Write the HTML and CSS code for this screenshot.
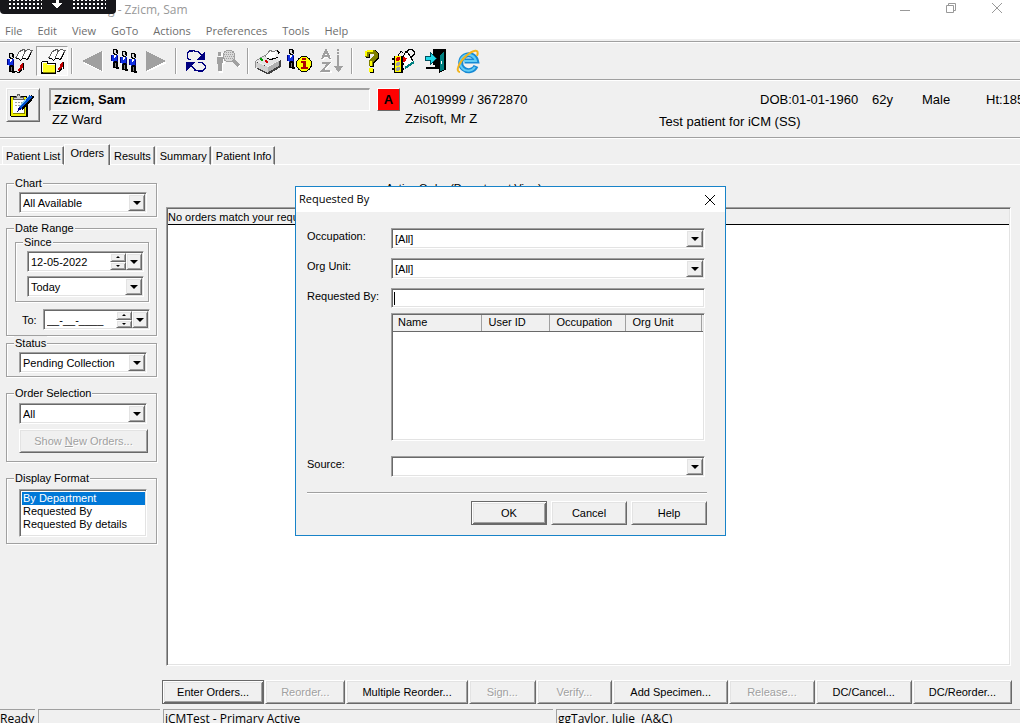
FILE: index.html
```html
<!DOCTYPE html>
<html lang="en">
<head>
<meta charset="utf-8">
<title>Zzicm, Sam</title>
<link rel="stylesheet" href="styles.css">
</head>
<body>
<svg class="defs" width="0" height="0" aria-hidden="true">
  <defs>
    <symbol id="person" viewBox="0 0 8 20">
      <path fill="#000" d="M2 0h4v1h1v4h-1v1h-3v-1h-1zM2 12h5v6h1v2h-3v-1h-3z"/>
      <path fill="#d8d8d8" d="M3 1h2v3h-2zM4 4h2v1h-2z"/>
      <path fill="#1030e0" d="M1 6h6v6h-4v1h-2z"/>
      <path fill="#fff" d="M3 6h2v2h-1v1h-1zM1 12h1v2h-1z"/>
      <path fill="#000080" d="M0 6h1v6h-1zM6 7h1v6h-1z"/>
      <path fill="#808080" d="M4 14h1v4h-1z"/>
    </symbol>
    <symbol id="book" viewBox="0 0 18 13">
      <path fill="#fff" d="M1 9L5 2L9 1L11 2L14 1L17 2L13 9L10 10L7 11L5 9Z"/>
      <path fill="none" stroke="#606060" d="M.5 9.500L4.500 2.500L8.500 .5L10.500 1.500L7 9M10.500 1.500L13.500 .5L17 1.500L13 9.500"/>
      <path fill="none" stroke="#000" d="M.5 9.500h3l2 2l2-2h3l1 1l2-1M16 4l-3 6"/>
    </symbol>
    <symbol id="redarrow" viewBox="0 0 8 10">
      <path fill="#c00000" d="M6 0v6l-1-1l-3 3h-1v-1l2-3l-1-1z"/>
      <path fill="none" stroke="#000" d="M6.500 0v7M0 9.500h2l3-3"/>
    </symbol>
  </defs>
</svg>

<header class="titlebar">
  <h1 class="title">g - Zzicm, Sam</h1>
  <div class="window-buttons">
    <button type="button" aria-label="Minimize"><svg width="12" height="12"><path d="M1 8.500h10"/></svg></button>
    <button type="button" aria-label="Restore"><svg width="12" height="12"><path d="M1.500 3.500h7v7h-7zM3.500 3v-1.500h7v7h-2"/></svg></button>
    <button type="button" aria-label="Close"><svg width="12" height="12"><path d="M1 1l10 10M11 1l-10 10"/></svg></button>
  </div>
  <div class="session-tab">
    <svg width="116" height="14" aria-hidden="true">
      <defs><pattern id="dots" width="4" height="4" patternUnits="userSpaceOnUse" x="1" y="-1"><rect width="2" height="2" fill="#fff"/></pattern></defs>
      <rect x="9" width="33" height="9" fill="url(#dots)"/>
      <rect x="73" width="33" height="9" fill="url(#dots)"/>
      <path fill="#fff" d="M56 0h3v3h3l-5 6l-5-6h4z"/>
    </svg>
  </div>
</header>

<nav class="menubar">
  <button type="button">File</button><button type="button">Edit</button><button type="button">View</button><button type="button">GoTo</button><button type="button">Actions</button><button type="button">Preferences</button><button type="button">Tools</button><button type="button">Help</button>
</nav>

<div class="toolbar" role="toolbar">
  <button type="button" aria-label="Patient list"><svg width="32" height="28"><use href="#person" x="3" y="6" width="8" height="20"/><use href="#book" x="11" y="2" width="18" height="13"/><use href="#redarrow" x="13" y="16" width="8" height="10"/><path fill="none" stroke="#000" d="M10 24.500h3"/></svg></button>
  <button type="button" class="pressed" aria-label="Patient folder"><svg width="32" height="28"><use href="#book" x="12" y="2" width="18" height="13"/><path fill="#000" d="M5 15h1v-1h6v2h8v11h-15z"/><path fill="#fff" d="M6 16v-1h5v2h8v8h-13z"/><path fill="#ffff20" d="M7 18h12v7h-12z"/><path fill="#ffff20" d="M7 16h4v2h-4z"/><path fill="#808000" d="M7 25h12v1h-12z"/><use href="#redarrow" x="21" y="15" width="8" height="10"/></svg></button>
  <span class="sep"></span>
  <button type="button" aria-label="Previous patient" disabled><svg width="32" height="28"><path fill="#fff" d="M27 5v20l-20-9z"/><path fill="#a0a0a0" d="M26 4v20l-20-10z"/></svg></button>
  <button type="button" aria-label="Select patient"><svg width="32" height="28"><use href="#person" x="3" y="2" width="8" height="20"/><use href="#person" x="12" y="4" width="8" height="20"/><use href="#person" x="21" y="6" width="8" height="20"/></svg></button>
  <button type="button" aria-label="Next patient" disabled><svg width="32" height="28"><path fill="#fff" d="M7 5v20l20-9z"/><path fill="#a0a0a0" d="M6 4v20l20-10z"/></svg></button>
  <span class="sep"></span>
  <button type="button" aria-label="Refresh"><svg width="32" height="28"><path fill="none" stroke="#000080" d="M11 12.500h-2l-2-2v-4l3-3h4l1 1h3l4 4M8 4.500h5M18 15.500h4l3 3v3l-3 3h-3l-1-1h-2l-5-5M19 23.500h4M15 4.500h3M14 23.500h3"/><path fill="#000080" d="M25 4v9h-9l5-4zM6 15h9l-4 4l-5 5z"/></svg></button>
  <button type="button" aria-label="Find patient" disabled><svg width="32" height="28"><path fill="#fff" d="M7 6h4v4h2v7h-2v9h-4z"/><path fill="#a0a0a0" d="M6 5h3v4h-3zM5 10h6v6h-1v8h-4v-7h-1z"/><path fill="none" stroke="#fff" stroke-width="3" d="M22 14l6 5"/><circle cx="17" cy="9" r="6" fill="#d8d8d8" stroke="#a0a0a0"/><path stroke="#a0a0a0" stroke-width="3" d="M21 13l6 6"/><path stroke="#a0a0a0" stroke-dasharray="1 1" d="M12 7.500h10M13 9.500h10M12 11.500h10M14 5.500h7"/></svg></button>
  <span class="sep"></span>
  <button type="button" aria-label="Print"><svg width="32" height="28"><path fill="#404040" d="M5 15l11 5l13-7v7l-12 7h-2l-10-5z"/><path fill="#e4e4e4" d="M4 14l9-5l15 4l-12 6z"/><path fill="#d0d0d0" d="M4 15l12 5v6l-12-6z"/><path fill="#b0b0b0" d="M16 20l11-6v5l-11 6z"/><path fill="none" stroke="#909090" d="M3.500 14v7M4 13.500l9-5"/><path fill="#fff" d="M14 9l4-6l3 1l4-1l-3 9l-3-1l-3 1z"/><path fill="none" stroke="#808080" d="M13 9.500l5-6l3 1l4-1"/><path fill="none" stroke="#000" d="M25 3.500l2 2l-1 1M15 11.500l4 1l3-1l4-1"/><path stroke="#00a000" stroke-width="2" d="M8 12l3 1"/><path stroke="#d00000" stroke-width="2" d="M13 14l3 1"/></svg></button>
  <button type="button" aria-label="Patient information"><svg width="32" height="28"><use href="#person" x="3" y="2" width="8" height="20"/><circle cx="20" cy="17" r="8" fill="#000"/><circle cx="20" cy="17" r="7" fill="#ff0"/><path fill="#b00000" d="M18 11h4v2h-4zM17 14h5v6h2v2h-7v-2h2v-4h-2z"/></svg></button>
  <button type="button" aria-label="Sort" disabled><svg width="32" height="28"><path fill="none" stroke="#fff" stroke-width="2" d="M7 13l4-9l4 9M8 10h7M7 16h7l-7 9h9"/><path fill="none" stroke="#a0a0a0" stroke-width="2" d="M6 12l4-9l4 9M7 9h6M6 16h7l-7 8h8M22 2v2M22 5v2M22 8v13"/><path fill="#a0a0a0" d="M18 19h9l-4 6h-1z"/></svg></button>
  <span class="sep"></span>
  <button type="button" aria-label="Help"><svg width="32" height="28"><path fill="none" stroke="#000" stroke-width="4" d="M12 11v-5l2-1h5l2 2v4l-5 4v5M16 22v4"/><path fill="none" stroke="#808000" stroke-width="4" d="M11 10v-4l2-1h5l2 2v3l-5 4v5"/><path fill="none" stroke="#ff0" stroke-width="2" d="M10 9v-4l2-1h5M15 14v5"/><path fill="#ff0" d="M13 21h4v4h-4z"/></svg></button>
  <button type="button" aria-label="Order status"><svg width="32" height="28"><path stroke="#000" stroke-width="2" d="M4 12h12M4 17h12M4 22h12"/><path fill="#000" d="M6 9h9v17h-9z"/><path fill="#ff0" d="M7 9h6v16h-6z"/><circle cx="10" cy="12" r="2" fill="#d00000"/><circle cx="10" cy="17" r="2" fill="#a0a0a0"/><circle cx="10" cy="22" r="2" fill="#a0a0a0"/><path fill="#fff" d="M16 10l4-6l6 11l-8 5l-3-5z"/><path fill="none" stroke="#000" d="M10 8.500l3-4l2 1M15 10l3-6M18 5.500l3-3h3l2 2v3l-3 3M19 4l7 12"/><path fill="#e00000" d="M15 10l4 1l-2 4h-2z"/><path fill="none" stroke="#008080" stroke-width="2" d="M17 21l9-6"/></svg></button>
  <button type="button" aria-label="Exit"><svg width="32" height="28"><path fill="#000" d="M13 2h13v21h-5v-1h-15v-2h9v-2h-2z"/><path fill="#008080" stroke="#000" d="M19.500 8.500l5-5v19l-5 3z"/><path fill="#20d8e8" stroke="#005060" d="M5.500 9.500h5v-4l6 6l-6 6v-4h-5z"/><path stroke="#fff" d="M21.500 14v3"/></svg></button>
  <button type="button" aria-label="Browser"><svg class="smooth" width="32" height="28"><path fill="none" stroke="#1689d4" stroke-width="5" d="M24 19a8 8 0 1 1 .5-5h-12"/><path fill="none" stroke="#62cdf5" stroke-width="2" d="M23 20a8 8 0 1 1 1-6h-12"/><path fill="none" stroke="#f2b41c" stroke-width="2" d="M8 25c-5 0-1-10 6-16s14-8 11 0"/></svg></button>
</div>

<section class="patient" aria-label="Patient">
  <button type="button" class="chart-button raised" aria-label="Chart"><svg width="30" height="30"><path fill="#000" d="M4 6h16v2h1v19h-17v-1h-1v-20z"/><path fill="#f0f000" d="M4 7h15v19h-15z"/><path fill="#808000" d="M6 9h12v15h-12z"/><path fill="#fff" d="M6 10h11v13h-11z"/><path fill="#d0d0d0" stroke="#606060" d="M6.500 9.500v-2h3l1-3h2l1 3h3v2z"/><path stroke="#a0a0a0" stroke-dasharray="2 1" d="M8 12.500h8M8 15.500h6"/><path stroke="#000" stroke-width="4" d="M14 19l12-13"/><path stroke="#0050d0" stroke-width="3" d="M13 18l11-12"/><path stroke="#80c8f0" d="M12 17l10-11"/><path fill="#000080" d="M10 22l2-5l3 2z"/></svg></button>
  <div class="who">
    <div class="name">Zzicm, Sam</div>
    <div class="ward">ZZ Ward</div>
  </div>
  <button type="button" class="alert">A</button>
  <div class="ids"><div class="mrn">A019999 / 3672870</div><div class="doctor">Zzisoft, Mr Z</div></div>
  <div class="facts">
    <div class="demographics"><span class="dob">DOB:01-01-1960</span><span class="age">62y</span><span class="sex">Male</span><span class="height">Ht:185</span></div>
    <div>Test patient for iCM (SS)</div>
  </div>
</section>

<div class="tabs" role="tablist">
  <button type="button" role="tab">Patient List</button>
  <button type="button" role="tab" class="active" aria-selected="true">Orders</button>
  <button type="button" role="tab">Results</button>
  <button type="button" role="tab">Summary</button>
  <button type="button" role="tab">Patient Info</button>
</div>

<div class="workspace">
  <aside class="filters">
    <fieldset class="group">
      <legend>Chart</legend>
      <div class="combo"><select aria-label="Chart"><option>All Available</option></select><span class="drop raised"></span></div>
    </fieldset>
    <fieldset class="group range">
      <legend>Date Range</legend>
      <fieldset class="group since">
        <legend>Since</legend>
        <div class="date"><input type="text" value="12-05-2022" aria-label="Since date"><span class="spin"><button type="button" class="raised up" aria-label="Later"></button><button type="button" class="raised down" aria-label="Earlier"></button></span><button type="button" class="drop raised" aria-label="Open calendar"></button></div>
        <div class="combo"><select aria-label="Since"><option>Today</option></select><span class="drop raised"></span></div>
      </fieldset>
      <div class="to">
        <label for="to-date">To:</label>
        <div class="date"><input id="to-date" type="text" value="__-__-____"><span class="spin"><button type="button" class="raised up" aria-label="Later"></button><button type="button" class="raised down" aria-label="Earlier"></button></span><button type="button" class="drop raised" aria-label="Open calendar"></button></div>
      </div>
    </fieldset>
    <fieldset class="group">
      <legend>Status</legend>
      <div class="combo"><select aria-label="Status"><option>Pending Collection</option></select><span class="drop raised"></span></div>
    </fieldset>
    <fieldset class="group selection">
      <legend>Order Selection</legend>
      <div class="combo"><select aria-label="Order Selection"><option>All</option></select><span class="drop raised"></span></div>
      <button type="button" class="push raised" disabled>Show <u>N</u>ew Orders...</button>
    </fieldset>
    <fieldset class="group format">
      <legend>Display Format</legend>
      <ul class="listbox" role="listbox" aria-label="Display Format">
        <li role="option" aria-selected="true">By Department</li>
        <li role="option">Requested By</li>
        <li role="option">Requested By details</li>
      </ul>
    </fieldset>
  </aside>

  <main class="main">
    <h2 class="heading">Active Order (Department View)</h2>
    <div class="orders"><div class="message">No orders match your request</div></div>
    <div class="actions">
      <button type="button" class="push raised default">Enter Orders...</button>
      <button type="button" class="push raised" disabled>Reorder...</button>
      <button type="button" class="push raised">Multiple Reorder...</button>
      <button type="button" class="push raised" disabled>Sign...</button>
      <button type="button" class="push raised" disabled>Verify...</button>
      <button type="button" class="push raised">Add Specimen...</button>
      <button type="button" class="push raised" disabled>Release...</button>
      <button type="button" class="push raised">DC/Cancel...</button>
      <button type="button" class="push raised">DC/Reorder...</button>
    </div>
  </main>
</div>

<footer class="statusbar"><span>Ready</span><span></span><span>iCMTest - Primary Active</span><span>ggTaylor, Julie&nbsp; (A&amp;C)</span></footer>

<div class="dialog" role="dialog" aria-labelledby="dialog-title">
  <div class="dialog-bar">
    <h2 id="dialog-title">Requested By</h2>
    <button type="button" aria-label="Close"><svg width="12" height="12"><path d="M1 1l10 10M11 1l-10 10"/></svg></button>
  </div>
  <form class="form">
    <label for="occupation">Occupation:</label>
    <div class="combo"><select id="occupation"><option>[All]</option></select><span class="drop raised"></span></div>
    <label for="org-unit">Org Unit:</label>
    <div class="combo"><select id="org-unit"><option>[All]</option></select><span class="drop raised"></span></div>
    <label for="requested-by">Requested By:</label>
    <div class="textbox"><span class="caret"></span><input id="requested-by" type="text"></div>
    <div class="results">
      <table>
        <thead><tr><th class="col-name">Name</th><th class="col-user">User ID</th><th class="col-occupation">Occupation</th><th class="col-org">Org Unit</th><th></th></tr></thead>
      </table>
    </div>
    <label for="source">Source:</label>
    <div class="combo"><select id="source"><option></option></select><span class="drop raised"></span></div>
  </form>
  <div class="dialog-actions">
    <button type="button" class="push raised default">OK</button>
    <button type="button" class="push raised">Cancel</button>
    <button type="button" class="push raised">Help</button>
  </div>
</div>
</body>
</html>
```

FILE: styles.css
```css
* { box-sizing: border-box; }

body {
  position: relative;
  display: flex;
  flex-direction: column;
  height: 100vh;
  margin: 0;
  overflow: hidden;
  background: #f0f0f0;
  color: #000;
  font: 11px/14px "Liberation Sans", sans-serif;
}

button, input, select {
  margin: 0;
  padding: 0;
  border: 0;
  border-radius: 0;
  outline: 0;
  background: none;
  color: inherit;
  font: inherit;
}

h1, h2, ul { margin: 0; padding: 0; font: inherit; }
svg { display: block; shape-rendering: crispEdges; }
.smooth { shape-rendering: auto; }
.defs { position: absolute; }

/* Bevels */
.raised {
  border: 1px solid;
  border-color: #fff #696969 #696969 #fff;
  background: #f0f0f0;
  box-shadow: inset 1px 1px 0 #e3e3e3, inset -1px -1px 0 #a0a0a0;
}

.combo, .date, .textbox, .listbox, .orders, .results {
  padding: 1px;
  border: 1px solid;
  border-color: #a0a0a0 #fff #fff #a0a0a0;
  background: #fff;
  box-shadow: inset 1px 1px 0 #696969, inset -1px -1px 0 #e3e3e3;
}

/* Window frame */
.titlebar {
  position: relative;
  display: flex;
  flex: none;
  justify-content: space-between;
  height: 20px;
  padding: 0 0 0 108px;
  background: #fff;
  color: #999;
}
.title { font: 12px/19px "Open Sans", sans-serif; }
.window-buttons { display: flex; }
.window-buttons button { width: 46px; height: 16px; padding-left: 17px; }
.window-buttons svg, .dialog-bar svg { fill: none; stroke: currentColor; shape-rendering: auto; }
.session-tab {
  position: absolute;
  top: 0;
  left: 0;
  height: 14px;
  border-radius: 0 0 4px 4px;
  background: #17171b;
}

.menubar {
  display: flex;
  flex: none;
  gap: 15px;
  height: 21px;
  padding: 0 5px;
  border-bottom: 2px solid #f0f0f0;
  background: #fff;
  color: #6d6d6d;
  font: 11px/21px "Open Sans", sans-serif;
}

.toolbar {
  display: flex;
  flex: none;
  align-items: center;
  height: 38px;
  padding-left: 4px;
  border-top: 1px solid #a0a0a0;
  box-shadow: inset 0 1px 0 #fff;
}
.toolbar button { width: 32px; height: 30px; }
.toolbar .pressed {
  border: 1px solid;
  border-color: #a0a0a0 #fff #fff #a0a0a0;
  background: #f8f8f8;
}
.pressed svg { margin: -1px; }
.sep { width: 2px; height: 26px; margin: 0 3px; border-left: 1px solid #a0a0a0; border-right: 1px solid #fff; }

/* Patient header */
.patient {
  display: flex;
  flex: none;
  align-items: flex-start;
  height: 58px;
  padding: 8px 0 0 6px;
  border-top: 1px solid #a0a0a0;
  box-shadow: inset 0 1px 0 #fff;
  font-size: 13px;
  line-height: 22px;
  white-space: nowrap;
}
.chart-button { flex: none; width: 34px; height: 34px; }
.who { flex: 0 0 321px; margin-left: 9px; }
.name {
  height: 23px;
  padding-left: 3px;
  border: 1px solid;
  border-width: 2px 1px 1px 2px;
  border-color: #a0a0a0 #fff #fff #a0a0a0;
  font-weight: bold;
  line-height: 19px;
}
.ward { padding-left: 3px; line-height: 17px; }
.alert {
  flex: none;
  width: 23px;
  height: 23px;
  margin-left: 7px;
  border: 1px solid;
  border-color: #fff #696969 #696969 #fff;
  background: #f00;
  font-weight: bold;
}
.ids { flex: 0 0 259px; padding: 2px 0 0 5px; }
.mrn { padding-left: 9px; }
.ids { line-height: 19px; }
.facts { padding-top: 1px; }
.demographics { display: flex; padding-left: 101px; }
.dob { width: 112px; }
.age { width: 50px; }
.sex { width: 64px; }

/* Tabs */
.tabs {
  display: flex;
  flex: none;
  align-items: flex-end;
  height: 28px;
  padding-left: 2px;
  border-top: 1px solid #a0a0a0;
  box-shadow: inset 0 1px 0 #fff, inset 0 -1px 0 #fff;
}
.tabs button {
  height: 19px;
  margin-right: 1px;
  padding: 0 3px;
  border: 1px solid;
  border-color: #fff #696969 transparent #fff;
  box-shadow: inset -1px 0 0 #a0a0a0;
}
.tabs .active {
  height: 21px;
  margin: 0 0 0 -1px;
  padding: 0 5px 4px;
  border-bottom: 0;
  background: #f0f0f0;
}

/* Filters */
.workspace { display: flex; flex: 1; min-height: 0; }
.filters { flex: 0 0 157px; padding: 11px 0 0 6px; }
.group {
  min-width: 0;
  margin: 0;
  padding: 2px 9px 3px 12px;
  border: 1px solid #a0a0a0;
  box-shadow: 1px 1px 0 #fff, inset 1px 1px 0 #fff;
}
.group legend { height: 14px; margin-left: -5px; padding: 0 1px; background: #f0f0f0; }
.range { margin-top: 4px; padding: 0 7px 5px 8px; }
.range > legend { margin-left: -1px; }
.since { padding: 2px 4px 4px 11px; }
.since .combo { margin-top: 4px; }
.since legend { margin-left: -4px; }
.to { display: flex; align-items: center; justify-content: space-between; margin-top: 7px; padding-left: 7px; }
.to .date { flex: 0 0 107px; margin-right: -1px; }
.selection { margin-top: 9px; padding: 3px 8px 8px 12px; }
.selection .combo { margin-right: 1px; }
.selection .push { width: 100%; margin-top: 5px; }
.format { margin-top: 9px; padding: 4px 9px 6px 12px; }

.combo { display: grid; grid-template-columns: 1fr 17px; height: 21px; }
.combo select { grid-area: 1 / 1 / 2 / 3; padding-left: 2px; appearance: none; }
.combo .drop { grid-area: 1 / 2; pointer-events: none; }
.drop { display: grid; place-content: center; width: 17px; }
.drop::after {
  content: "";
  border: solid transparent;
  border-width: 4px 4px 0;
  border-top-color: #000;
}
.date { display: flex; height: 21px; }
.date input { flex: 1; width: 0; padding-left: 2px; }
.date .drop { width: 16px; }
.spin { display: flex; flex: 0 0 16px; flex-direction: column; }
.spin button { display: grid; flex: 1; place-content: center; min-height: 0; }
.spin button::after { content: ""; border: solid transparent; }
.spin .up::after { border-width: 0 2px 2px; border-bottom-color: #000; }
.spin .down::after { border-width: 2px 2px 0; border-top-color: #000; }

.listbox { height: 48px; list-style: none; line-height: 13px; }
.listbox li { padding-left: 1px; margin: 0 0 0 1px; }
.listbox [aria-selected] { margin-top: 1px; background: #0078d7; color: #fff; }

.push { height: 24px; text-align: center; white-space: nowrap; }
.push:disabled { color: #a0a0a0; text-shadow: 1px 1px 0 #fff; }
.default {
  border-color: #696969;
  box-shadow: inset 1px 1px 0 #fff, inset -1px -1px 0 #696969, inset 2px 2px 0 #e3e3e3, inset -2px -2px 0 #a0a0a0;
}

/* Orders */
.main { display: flex; flex: 1; flex-direction: column; min-width: 0; padding: 16px 8px 5px 5px; }
.heading { height: 26px; padding-left: 224px; }
.orders { flex: 1; margin: 0 1px 0 4px; }
.message { height: 16px; border-bottom: 1px solid #000; background: #f0f0f0; line-height: 16px; }
.actions {
  display: grid;
  grid-template-columns: 102fr 80fr 121fr 67fr 75fr 115fr 85fr 96fr 99fr;
  gap: 1px;
  margin-top: 14px;
}

.statusbar {
  display: grid;
  flex: none;
  grid-template-columns: 35px 122px 390px 1fr;
  gap: 3px;
  height: 14px;
  overflow: hidden;
  font: 12px/17px "Open Sans", sans-serif;
}
.statusbar span { padding-left: 1px; border-top: 1px solid #a0a0a0; border-left: 1px solid #a0a0a0; white-space: pre; }
.statusbar span:first-child { padding: 0; border-left: 0; }

/* Dialog */
.dialog {
  position: absolute;
  top: 186px;
  left: 295px;
  width: 431px;
  border: 1px solid #1883c8;
  background: #f0f0f0;
}
.dialog-bar {
  display: flex;
  align-items: center;
  justify-content: space-between;
  height: 25px;
  padding: 0 9px 0 3px;
  background: #fff;
  font: 11px/22px "Open Sans", sans-serif;
}
.dialog-bar h2 { height: 24px; }
.form {
  display: grid;
  grid-template-columns: 84px 1fr;
  row-gap: 9px;
  margin: 16px 20px 0 11px;
}
.form label { padding-top: 1px; }
.textbox { display: flex; align-items: center; height: 20px; }
.textbox input { flex: 1; }
.caret { width: 1px; height: 13px; margin-left: 1px; background: #000; }
.results { grid-column: 2; height: 128px; margin: -4px 0 6px; }
.results table { width: 100%; border-collapse: collapse; table-layout: fixed; }
.results th {
  height: 16px;
  padding: 0 0 0 7px;
  border-right: 1px solid #a0a0a0;
  border-bottom: 1px solid #696969;
  background: #f0f0f0;
  font-weight: normal;
  line-height: 13px;
  text-align: left;
}
.results .col-name { padding-left: 5px; }
.results th:last-child { border-right: 0; padding: 0; }
.col-name { width: 88px; }
.col-user { width: 68px; }
.col-occupation, .col-org { width: 76px; }
.dialog-actions {
  display: flex;
  justify-content: flex-end;
  gap: 4px;
  margin: 15px 18px 10px 11px;
  padding-top: 8px;
  border-top: 1px solid #a0a0a0;
  box-shadow: inset 0 1px 0 #fff;
}
.dialog-actions .push { width: 76px; }
```
